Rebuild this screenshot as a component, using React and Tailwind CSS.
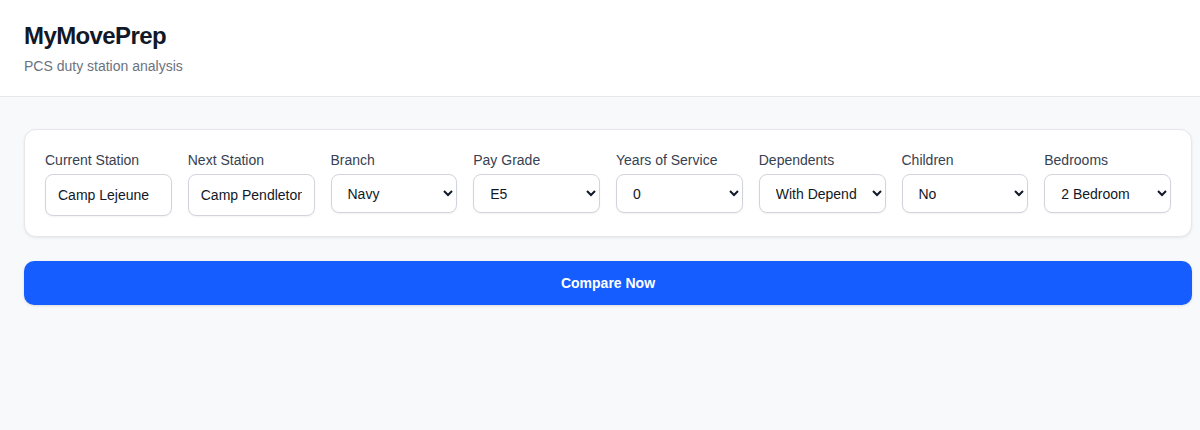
const FIELDS = [
  { label: 'Current Station', type: 'input', value: 'Camp Lejeune' },
  { label: 'Next Station', type: 'input', value: 'Camp Pendleton' },
  { label: 'Branch', type: 'select', value: 'Navy', options: ['Army', 'Navy', 'Air Force', 'Marine Corps', 'Coast Guard', 'Space Force'] },
  { label: 'Pay Grade', type: 'select', value: 'E5', options: ['E1', 'E2', 'E3', 'E4', 'E5', 'E6', 'E7', 'E8', 'E9'] },
  { label: 'Years of Service', type: 'select', value: '0', options: ['0', '2', '4', '6', '8', '10'] },
  { label: 'Dependents', type: 'select', value: 'With Dependents', options: ['With Dependents', 'Without Dependents'] },
  { label: 'Children', type: 'select', value: 'No', options: ['No', 'Yes'] },
  { label: 'Bedrooms', type: 'select', value: '2 Bedroom', options: ['1 Bedroom', '2 Bedroom', '3 Bedroom', '4 Bedroom'] },
]

export default function App() {
  return (
    <div className="h-[430px] overflow-hidden bg-[#f8f9fb] font-['Liberation_Sans',Arial,sans-serif]">
      <header className="bg-white border-b border-[#e5e7eb] pl-6 pr-2 pt-[21px] pb-[20px]">
        <h1 className="text-[24px] leading-[30px] font-bold tracking-tight text-[#111827]">MyMovePrep</h1>
        <p className="text-[14px] leading-[20px] text-[#6b7280] mt-[5px]">PCS duty station analysis</p>
      </header>

      <main className="pl-6 pr-2 pt-8">
        <div className="bg-white rounded-xl border border-[#e5e7eb] shadow-[0_1px_3px_rgba(0,0,0,0.08)] p-5">
          <div className="grid grid-cols-8 gap-4 items-start">
            {FIELDS.map((field) => (
              <div key={field.label} className="flex flex-col min-w-0">
                <label className="text-[14px] leading-[20px] text-[#374151] mb-1">{field.label}</label>
                {field.type === 'input' ? (
                  <input
                    type="text"
                    defaultValue={field.value}
                    className="h-[42px] w-full rounded-lg border border-[#d1d5db] bg-white px-3 text-[14px] text-[#111827] shadow-[0_1px_2px_rgba(0,0,0,0.05)] outline-none"
                  />
                ) : (
                  <select
                    defaultValue={field.value}
                    className="h-[39px] w-full rounded-lg border border-[#d1d5db] bg-white px-3 text-[14px] text-[#111827] shadow-[0_1px_2px_rgba(0,0,0,0.05)] outline-none"
                  >
                    {field.options.map((opt) => (
                      <option key={opt} value={opt}>{opt}</option>
                    ))}
                  </select>
                )}
              </div>
            ))}
          </div>
        </div>

        <button className="mt-6 w-full h-11 rounded-[10px] bg-[#165dff] text-white text-[14px] font-bold shadow-[0_1px_3px_rgba(0,0,0,0.12)]">
          Compare Now
        </button>
      </main>
    </div>
  )
}
